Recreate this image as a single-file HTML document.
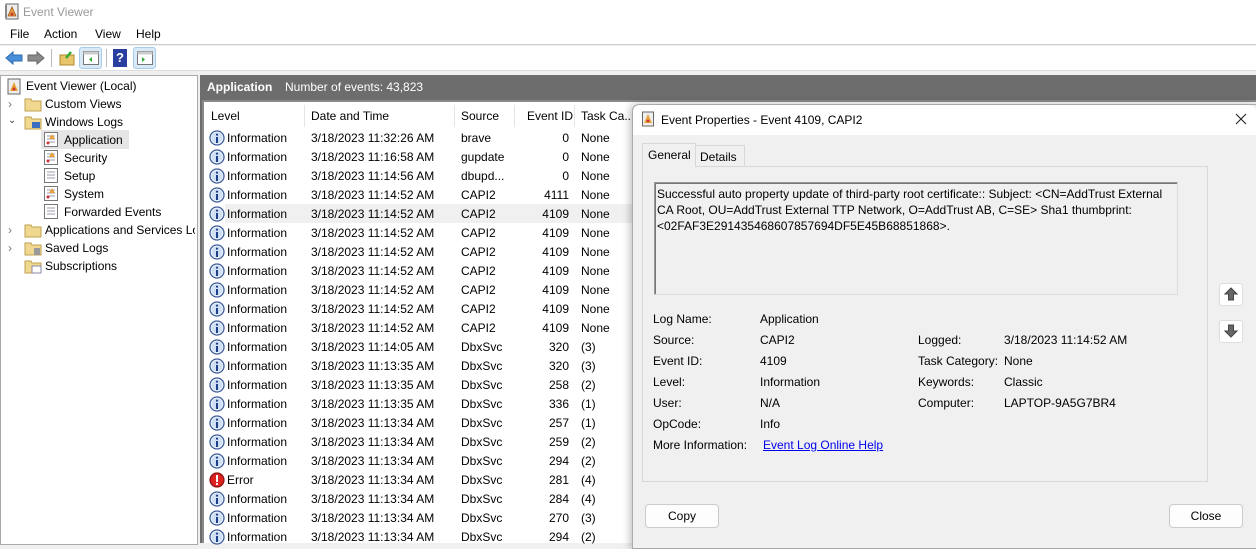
<!DOCTYPE html>
<html><head><meta charset="utf-8"><style>
*{margin:0;padding:0;box-sizing:border-box}
body{width:1256px;height:543px;overflow:hidden;background:#f0f0f0;font-family:"Liberation Sans",sans-serif;font-size:12px;color:#000;position:relative}
.a{position:absolute;white-space:nowrap}
.ico{position:absolute}
</style></head><body>
<div class="a" style="left:0;top:0;width:1256px;height:24px;background:#fff"></div>
<svg class="ico" style="left:4px;top:3px" width="16" height="17"><rect x="2" y="1" width="12" height="15" fill="#eee" stroke="#666"/><rect x="1" y="2" width="2" height="13" fill="#888"/><path d="M8 4 L12 13 L4 13 Z" fill="#e8a23a" stroke="#a0521a" stroke-width=".8"/><circle cx="8" cy="11" r="1.5" fill="#c33"/></svg>
<div class="a" style="left:23px;top:5px;color:#999;font-size:12px">Event Viewer</div>
<div class="a" style="left:0;top:24px;width:1256px;height:21px;background:#fff;border-bottom:1px solid #ccc"></div>
<div class="a" style="left:10px;top:27px">File</div>
<div class="a" style="left:44px;top:27px">Action</div>
<div class="a" style="left:95px;top:27px">View</div>
<div class="a" style="left:136px;top:27px">Help</div>
<div class="a" style="left:0;top:46px;width:1256px;height:25px;background:#fff;border-bottom:1px solid #ddd"></div>
<svg class="ico" style="left:4px;top:50px" width="42" height="16"><path d="M2 8 L9 2 L9 5 L18 5 L18 11 L9 11 L9 14 Z" fill="#4a90d9" stroke="#2a6cb0"/><path d="M40 8 L33 2 L33 5 L24 5 L24 11 L33 11 L33 14 Z" fill="#8a8a8a" stroke="#666"/></svg>
<div class="a" style="left:51px;top:49px;width:1px;height:18px;background:#bbb"></div>
<svg class="ico" style="left:58px;top:49px" width="18" height="18"><rect x="2" y="6" width="14" height="10" fill="#e8c56a" stroke="#b08a30"/><path d="M8 9 L13 3" stroke="#3a3" stroke-width="2.5"/></svg>
<div class="a" style="left:79px;top:47px;width:23px;height:22px;background:#d8eaf8;border:1px solid #a8cbea;border-radius:3px"></div>
<svg class="ico" style="left:83px;top:51px" width="16" height="14"><rect x=".5" y=".5" width="15" height="13" fill="#fff" stroke="#777"/><rect x=".5" y=".5" width="15" height="3" fill="#ccc"/><path d="M9 6 L6 8.5 L9 11Z" fill="#3a3"/></svg>
<div class="a" style="left:106px;top:49px;width:1px;height:18px;background:#bbb"></div>
<div class="a" style="left:113px;top:49px;width:14px;height:18px;background:#2a3ea0;color:#fff;font-weight:bold;font-size:13px;text-align:center;line-height:18px">?</div>
<div class="a" style="left:133px;top:47px;width:23px;height:22px;background:#d8eaf8;border:1px solid #a8cbea;border-radius:3px"></div>
<svg class="ico" style="left:137px;top:51px" width="16" height="14"><rect x=".5" y=".5" width="15" height="13" fill="#fff" stroke="#777"/><rect x=".5" y=".5" width="15" height="3" fill="#ccc"/><path d="M5 6 L8 8.5 L5 11Z" fill="#3a3"/></svg>
<div class="a" style="left:0;top:75px;width:198px;height:470px;background:#fff;border:1px solid #aaa"></div>
<svg class="ico" style="left:6px;top:78px" width="16" height="17"><rect x="2" y="1" width="12" height="15" fill="#eee" stroke="#666"/><path d="M8 4 L12 13 L4 13 Z" fill="#e8a23a"/><circle cx="8" cy="11" r="1.5" fill="#c33"/></svg>
<div class="a" style="left:26px;top:79px">Event Viewer (Local)</div>
<div class="a" style="left:8px;top:97px;color:#777">›</div>
<div class="a" style="left:8px;top:115px;color:#444;font-size:10px">⌄</div>
<div class="a" style="left:8px;top:223px;color:#777">›</div>
<div class="a" style="left:8px;top:241px;color:#777">›</div>
<svg class="ico" style="left:24px;top:96px" width="18" height="16"><path d="M1 3 L7 3 L8 5 L17 5 L17 15 L1 15Z" fill="#f0d890" stroke="#c0a050"/></svg>
<svg class="ico" style="left:24px;top:114px" width="18" height="16"><path d="M1 3 L7 3 L8 5 L17 5 L17 15 L1 15Z" fill="#f0d890" stroke="#c0a050"/><rect x="8" y="8" width="8" height="6" fill="#3a6cc0"/></svg>
<svg class="ico" style="left:24px;top:222px" width="18" height="16"><path d="M1 3 L7 3 L8 5 L17 5 L17 15 L1 15Z" fill="#f0d890" stroke="#c0a050"/></svg>
<svg class="ico" style="left:24px;top:240px" width="18" height="16"><path d="M1 3 L7 3 L8 5 L17 5 L17 15 L1 15Z" fill="#f0d890" stroke="#c0a050"/><rect x="10" y="8" width="6" height="7" fill="#999"/></svg>
<svg class="ico" style="left:24px;top:258px" width="18" height="16"><path d="M1 3 L7 3 L8 5 L17 5 L17 15 L1 15Z" fill="#f0d890" stroke="#c0a050"/><rect x="8" y="8" width="9" height="7" fill="#fff" stroke="#88a"/></svg>
<div class="a" style="left:45px;top:97px">Custom Views</div>
<div class="a" style="left:45px;top:115px">Windows Logs</div>
<div class="a" style="left:41px;top:130px;width:88px;height:19px;background:#e5e5e5"></div>
<div class="a" style="left:64px;top:133px">Application</div>
<div class="a" style="left:64px;top:151px">Security</div>
<div class="a" style="left:64px;top:169px">Setup</div>
<div class="a" style="left:64px;top:187px">System</div>
<div class="a" style="left:64px;top:205px">Forwarded Events</div>
<div class="a" style="left:45px;top:223px;width:150px;overflow:hidden">Applications and Services Lo</div>
<div class="a" style="left:45px;top:241px">Saved Logs</div>
<div class="a" style="left:45px;top:259px">Subscriptions</div>
<svg class="ico" style="left:43px;top:131px" width="16" height="90">
<g><rect x="1.5" y="1.5" width="13" height="14" fill="#fff" stroke="#777"/><path d="M4 5h8M4 8h8M4 11h8" stroke="#99a"/><path d="M9 3 L12 8 L6 8Z" fill="#e8a23a"/><circle cx="5" cy="12" r="1.5" fill="#c33"/></g>
<g transform="translate(0,18)"><rect x="1.5" y="1.5" width="13" height="14" fill="#fff" stroke="#777"/><path d="M4 5h8M4 8h8M4 11h8" stroke="#99a"/><path d="M9 3 L12 8 L6 8Z" fill="#e8a23a"/><circle cx="5" cy="12" r="1.5" fill="#c33"/></g>
<g transform="translate(0,36)"><rect x="1.5" y="1.5" width="13" height="14" fill="#fff" stroke="#777"/><path d="M4 5h8M4 8h8M4 11h8" stroke="#99a"/></g>
<g transform="translate(0,54)"><rect x="1.5" y="1.5" width="13" height="14" fill="#fff" stroke="#777"/><path d="M4 5h8M4 8h8M4 11h8" stroke="#99a"/><path d="M9 3 L12 8 L6 8Z" fill="#e8a23a"/><circle cx="5" cy="12" r="1.5" fill="#c33"/></g>
<g transform="translate(0,72)"><rect x="1.5" y="1.5" width="13" height="14" fill="#fff" stroke="#777"/><path d="M4 5h8M4 8h8M4 11h8" stroke="#99a"/></g>
</svg>
<div class="a" style="left:200px;top:75px;width:1056px;height:468px;background:#6d6d6d"></div>
<div class="a" style="left:207px;top:80px;color:#fff;font-weight:bold">Application</div>
<div class="a" style="left:285px;top:80px;color:#fff">Number of events: 43,823</div>
<div class="a" style="left:202px;top:100px;width:1054px;height:443px;background:#fff;border:2px solid #8a8a8a;border-right:none;border-bottom:none"></div>
<div class="a" style="left:205px;top:105px;width:440px;height:22px;background:#fff"></div>
<div class="a" style="left:211px;top:109px">Level</div>
<div class="a" style="left:304px;top:105px;width:1px;height:22px;background:#e5e5e5"></div>
<div class="a" style="left:311px;top:109px">Date and Time</div>
<div class="a" style="left:454px;top:105px;width:1px;height:22px;background:#e5e5e5"></div>
<div class="a" style="left:461px;top:109px">Source</div>
<div class="a" style="left:514px;top:105px;width:1px;height:22px;background:#e5e5e5"></div>
<div class="a" style="left:527px;top:109px">Event ID</div>
<div class="a" style="left:574px;top:105px;width:1px;height:22px;background:#e5e5e5"></div>
<div class="a" style="left:581px;top:109px">Task Ca...</div>
<div class="a" style="left:225px;top:204px;width:420px;height:19px;background:#f0f0f0"></div>
<div id="rows"></div>
<script>
var d=[["I","11:32:26","brave","0","None"],["I","11:16:58","gupdate","0","None"],["I","11:14:56","dbupd...","0","None"],["I","11:14:52","CAPI2","4111","None"],["I","11:14:52","CAPI2","4109","None"],["I","11:14:52","CAPI2","4109","None"],["I","11:14:52","CAPI2","4109","None"],["I","11:14:52","CAPI2","4109","None"],["I","11:14:52","CAPI2","4109","None"],["I","11:14:52","CAPI2","4109","None"],["I","11:14:52","CAPI2","4109","None"],["I","11:14:05","DbxSvc","320","(3)"],["I","11:13:35","DbxSvc","320","(3)"],["I","11:13:35","DbxSvc","258","(2)"],["I","11:13:35","DbxSvc","336","(1)"],["I","11:13:34","DbxSvc","257","(1)"],["I","11:13:34","DbxSvc","259","(2)"],["I","11:13:34","DbxSvc","294","(2)"],["E","11:13:34","DbxSvc","281","(4)"],["I","11:13:34","DbxSvc","284","(4)"],["I","11:13:34","DbxSvc","270","(3)"],["I","11:13:34","DbxSvc","294","(2)"]];
var h="";d.forEach(function(r,i){var y=131+i*19;
var ic=r[0]=="I"?'<svg class="ico" style="left:209px;top:'+(y-1)+'px" width="16" height="16"><circle cx="8" cy="8" r="7" fill="#fff" stroke="#3b5a9a" stroke-width="1.3"/><circle cx="8" cy="8" r="5.6" fill="#cfe0f5"/><rect x="7" y="7" width="2" height="6" fill="#1e3e8a"/><circle cx="8" cy="4.6" r="1.1" fill="#1e3e8a"/></svg>':'<svg class="ico" style="left:209px;top:'+(y-1)+'px" width="16" height="16"><circle cx="8" cy="8" r="7" fill="#d22" stroke="#811" stroke-width="1.2"/><rect x="7" y="3" width="2" height="7" fill="#fff"/><circle cx="8" cy="12" r="1.1" fill="#fff"/></svg>';
h+=ic+'<div class="a" style="left:227px;top:'+y+'px">'+(r[0]=="I"?"Information":"Error")+'</div><div class="a" style="left:311px;top:'+y+'px">3/18/2023 '+r[1]+' AM</div><div class="a" style="left:461px;top:'+y+'px">'+r[2]+'</div><div class="a" style="left:520px;width:49px;text-align:right;top:'+y+'px">'+r[3]+'</div><div class="a" style="left:581px;top:'+y+'px">'+r[4]+'</div>';});
document.getElementById("rows").innerHTML=h;
</script>
<div class="a" style="left:632px;top:104px;width:630px;height:445px;background:#f0f0f0;border:1px solid #aaa;border-radius:7px 7px 0 0;box-shadow:-2px 0 8px rgba(0,0,0,.25)"></div>
<div class="a" style="left:633px;top:105px;width:623px;height:30px;background:#fff;border-radius:7px 7px 0 0"></div>
<svg class="ico" style="left:641px;top:111px" width="14" height="16"><rect x="1.5" y="1" width="11" height="14" fill="#eee" stroke="#666"/><path d="M7 3 L11 12 L3 12Z" fill="#e8a23a"/><circle cx="7" cy="10" r="1.4" fill="#c33"/></svg>
<div class="a" style="left:661px;top:113px">Event Properties - Event 4109, CAPI2</div>
<svg class="ico" style="left:1235px;top:113px" width="12" height="12"><path d="M1 1L11 11M11 1L1 11" stroke="#222" stroke-width="1.1"/></svg>
<div class="a" style="left:642px;top:166px;width:566px;height:316px;border:1px solid #d8d8d8;background:#f0f0f0"></div>
<div class="a" style="left:642px;top:143px;width:54px;height:24px;border:1px solid #d8d8d8;border-bottom:none;background:#f0f0f0"></div>
<div class="a" style="left:648px;top:148px">General</div>
<div class="a" style="left:695px;top:145px;width:50px;height:21px;border:1px solid #d8d8d8;border-bottom:none;background:#f0f0f0"></div>
<div class="a" style="left:700px;top:150px">Details</div>
<div class="a" style="left:654px;top:182px;width:524px;height:113px;border:1px solid #999;border-right-color:#ddd;border-bottom-color:#ddd;box-shadow:inset 1px 1px 0 #777"></div>
<div class="a" style="left:657px;top:186px;line-height:16px;white-space:normal;width:520px">Successful auto property update of third-party root certificate:: Subject: &lt;CN=AddTrust External CA Root, OU=AddTrust External TTP Network, O=AddTrust AB, C=SE&gt; Sha1 thumbprint: &lt;02FAF3E291435468607857694DF5E45B68851868&gt;.</div>
<div class="a" style="left:1219px;top:283px;width:24px;height:23px;background:#fff;border:1px solid #ddd;border-radius:3px"></div>
<svg class="ico" style="left:1224px;top:287px" width="14" height="14"><path d="M7 1L13 7L9.5 7L9.5 13L4.5 13L4.5 7L1 7Z" fill="#666" stroke="#444"/></svg>
<div class="a" style="left:1219px;top:320px;width:24px;height:23px;background:#fff;border:1px solid #ddd;border-radius:3px"></div>
<svg class="ico" style="left:1224px;top:324px" width="14" height="14"><path d="M7 13L13 7L9.5 7L9.5 1L4.5 1L4.5 7L1 7Z" fill="#666" stroke="#444"/></svg>
<div class="a" style="left:653px;top:309px;line-height:21px">Log Name:<br>Source:<br>Event ID:<br>Level:<br>User:<br>OpCode:<br>More Information:</div>
<div class="a" style="left:760px;top:309px;line-height:21px">Application<br>CAPI2<br>4109<br>Information<br>N/A<br>Info</div>
<div class="a" style="left:763px;top:438px;color:#00e;text-decoration:underline">Event Log Online Help</div>
<div class="a" style="left:918px;top:330px;line-height:21px">Logged:<br>Task Category:<br>Keywords:<br>Computer:</div>
<div class="a" style="left:1004px;top:330px;line-height:21px">3/18/2023 11:14:52 AM<br>None<br>Classic<br>LAPTOP-9A5G7BR4</div>
<div class="a" style="left:645px;top:504px;width:74px;height:24px;background:#fdfdfd;border:1px solid #ccc;border-radius:4px;text-align:center;line-height:22px">Copy</div>
<div class="a" style="left:1169px;top:504px;width:74px;height:24px;background:#fdfdfd;border:1px solid #ccc;border-radius:4px;text-align:center;line-height:22px">Close</div>
</body></html>
